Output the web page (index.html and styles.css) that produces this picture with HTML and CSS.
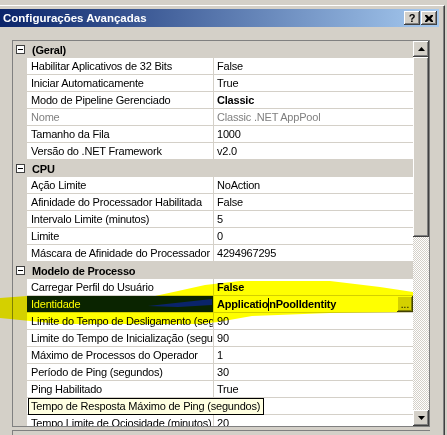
FILE: index.html
```html
<!DOCTYPE html>
<html lang="pt">
<head>
<meta charset="utf-8">
<title>Configurações Avançadas</title>
<link rel="stylesheet" href="styles.css">
</head>
<body>
<div class="window">
  <div class="titlebar">
    <span class="title">Configurações Avançadas</span>
    <div class="tbtns">
      <div class="cbtn help">?</div>
      <div class="cbtn close"><svg width="8" height="7" viewBox="0 0 8 7"><path d="M0 0h2l2 2 2-2h2v1L6 3.5 8 6v1H6L4 5 2 7H0V6l2-2.5L0 1z" fill="#000"/></svg></div>
    </div>
  </div>
  <div class="grid">
    <div class="rows">
      <div class="cat"><span class="toggle"></span><span class="cat-label">(Geral)</span></div>
      <div class="row"><div class="name">Habilitar Aplicativos de 32 Bits</div><div class="val">False</div></div>
      <div class="row"><div class="name">Iniciar Automaticamente</div><div class="val">True</div></div>
      <div class="row"><div class="name">Modo de Pipeline Gerenciado</div><div class="val bold">Classic</div></div>
      <div class="row ro"><div class="name">Nome</div><div class="val">Classic .NET AppPool</div></div>
      <div class="row"><div class="name">Tamanho da Fila</div><div class="val">1000</div></div>
      <div class="row"><div class="name">Versão do .NET Framework</div><div class="val">v2.0</div></div>
      <div class="cat"><span class="toggle"></span><span class="cat-label">CPU</span></div>
      <div class="row"><div class="name">Ação Limite</div><div class="val">NoAction</div></div>
      <div class="row"><div class="name">Afinidade do Processador Habilitada</div><div class="val">False</div></div>
      <div class="row"><div class="name">Intervalo Limite (minutos)</div><div class="val">5</div></div>
      <div class="row"><div class="name">Limite</div><div class="val">0</div></div>
      <div class="row"><div class="name">Máscara de Afinidade do Processador</div><div class="val">4294967295</div></div>
      <div class="cat"><span class="toggle"></span><span class="cat-label">Modelo de Processo</span></div>
      <div class="row"><div class="name">Carregar Perfil do Usuário</div><div class="val bold">False</div></div>
      <div class="row selected"><div class="name">Identidade</div><div class="val bold"><span>Applicatio</span><span class="caret"></span><span>nPoolIdentity</span><div class="ellipsis">...</div></div></div>
      <div class="row"><div class="name">Limite do Tempo de Desligamento (segundos)</div><div class="val">90</div></div>
      <div class="row"><div class="name">Limite do Tempo de Inicialização (segundos)</div><div class="val">90</div></div>
      <div class="row"><div class="name">Máximo de Processos do Operador</div><div class="val">1</div></div>
      <div class="row"><div class="name">Período de Ping (segundos)</div><div class="val">30</div></div>
      <div class="row"><div class="name">Ping Habilitado</div><div class="val">True</div></div>
      <div class="row tiprow"><div class="name"><span class="tooltip">Tempo de Resposta Máximo de Ping (segundos)</span></div><div class="val"></div></div>
      <div class="row"><div class="name">Tempo Limite de Ociosidade (minutos)</div><div class="val">20</div></div>
    </div>
    <div class="vscroll">
      <div class="sbtn"><svg width="7" height="4" viewBox="0 0 7 4"><path d="M3.5 0L7 4H0z" fill="#000"/></svg></div>
      <div class="thumb"></div>
      <div class="track"></div>
      <div class="sbtn"><svg width="7" height="4" viewBox="0 0 7 4"><path d="M0 0h7L3.5 4z" fill="#000"/></svg></div>
    </div>
  </div>
  <div class="desc"></div>
</div>
<svg class="marker" width="447" height="435" viewBox="0 0 447 435">
  <path fill-rule="evenodd" fill="#ffff00" d="M0 298 L27 296 L155 296 L178 291 L205 285 L240 281 L330 281 L380 287 L413 292 L413 312 L330 313 L252 316 L218 322 L200 324 L60 324 L20 320 L0 318 Z M148 306 L212 299 L212 305 L178 307 Z"/>
</svg>
</body>
</html>
```
FILE: styles.css
```css
* { box-sizing: border-box; }

html, body {
  margin: 0;
  padding: 0;
}

body {
  width: 447px;
  height: 435px;
  overflow: hidden;
  position: relative;
  background: #d4d0c8;
  font-family: "Liberation Sans", Tahoma, Arial, sans-serif;
  font-size: 11px;
  color: #000;
}

.window {
  margin-top: 5px;
  width: 445px;
  height: 430px;
  border-top: 1px solid #ffffff;
  border-right: 1px solid #404040;
  box-shadow: inset -1px 0 0 #808080;
  padding-top: 3px;
}

.titlebar {
  width: 439px;
  height: 18px;
  background: linear-gradient(to right, #0a246a, #a6caf0);
  display: flex;
  align-items: center;
  justify-content: space-between;
  padding: 0 2px 0 3px;
}

.title {
  color: #fff;
  font-weight: bold;
  font-size: 11.5px;
}

.tbtns {
  display: flex;
}

.cbtn {
  width: 16px;
  height: 14px;
  background: #d4d0c8;
  box-shadow: inset -1px -1px 0 #404040, inset 1px 1px 0 #ffffff, inset -2px -2px 0 #808080;
  display: flex;
  align-items: center;
  justify-content: center;
  font-weight: bold;
  font-size: 11px;
  line-height: 14px;
}

.cbtn.help {
  margin-right: 1px;
  padding-bottom: 1px;
}

.grid {
  margin: 13px 0 0 12px;
  width: 418px;
  height: 387px;
  border: 1px solid #808080;
  display: flex;
  background: #d4d0c8;
}

.rows {
  width: 400px;
  height: 385px;
  overflow: hidden;
  background: #d4d0c8;
  letter-spacing: -0.2px;
}

.cat {
  height: 17px;
  display: flex;
  align-items: center;
  font-weight: bold;
}

.toggle {
  width: 9px;
  height: 9px;
  margin-left: 3px;
  margin-right: 7px;
  border: 1px solid #404040;
  background: #fff;
  display: flex;
  align-items: center;
  justify-content: center;
}

.toggle::after {
  content: "";
  width: 5px;
  height: 1px;
  background: #000;
}

.cat-label {
  line-height: 16px;
}

.row {
  height: 17px;
  margin-left: 14px;
  display: flex;
  border-bottom: 1px solid #d4d0c8;
  background: #fff;
}

.name {
  width: 187px;
  height: 16px;
  line-height: 16px;
  padding-left: 4px;
  border-right: 1px solid #d4d0c8;
  white-space: nowrap;
  overflow: hidden;
  position: relative;
}

.val {
  width: 199px;
  height: 16px;
  line-height: 16px;
  padding-left: 3px;
  white-space: nowrap;
  overflow: hidden;
  display: flex;
}

.bold { font-weight: bold; }

.ro .name, .ro .val { color: #808080; }

.selected .name {
  background: #0a246a;
  color: #fff;
}

.caret {
  width: 1px;
  height: 13px;
  margin-top: 2px;
  background: #000;
}

.ellipsis {
  margin-left: auto;
  width: 16px;
  height: 16px;
  background: #d4d0c8;
  box-shadow: inset -1px -1px 0 #404040, inset 1px 1px 0 #ffffff, inset -2px -2px 0 #808080;
  font-weight: normal;
  font-size: 10px;
  line-height: 18px;
  text-align: center;
  letter-spacing: 0;
}

.tiprow { position: relative; z-index: 2; }
.tiprow .name { overflow: visible; }

.tooltip {
  position: absolute;
  left: 1px;
  top: 0;
  height: 17px;
  line-height: 15px;
  padding: 0 3px 0 2px;
  border: 1px solid #000;
  background: #ffffe1;
  white-space: nowrap;
}

.vscroll {
  width: 16px;
  height: 385px;
  display: flex;
  flex-direction: column;
}

.sbtn {
  width: 16px;
  height: 16px;
  background: #d4d0c8;
  box-shadow: inset -1px -1px 0 #404040, inset 1px 1px 0 #ffffff, inset -2px -2px 0 #808080;
  display: flex;
  align-items: center;
  justify-content: center;
}

.thumb {
  height: 180px;
  background: #d4d0c8;
  box-shadow: inset -1px -1px 0 #404040, inset 1px 1px 0 #ffffff, inset -2px -2px 0 #808080;
}

.track {
  flex: 1;
  background: repeating-conic-gradient(#ffffff 0 25%, #d4d0c8 0 50%) 0 0 / 2px 2px;
}

.desc {
  margin: 3px 0 0 12px;
  width: 418px;
  height: 20px;
  border-top: 1px solid #808080;
  border-left: 1px solid #808080;
}

.marker {
  position: absolute;
  left: 0;
  top: 0;
  pointer-events: none;
  mix-blend-mode: multiply;
  z-index: 5;
}
```
